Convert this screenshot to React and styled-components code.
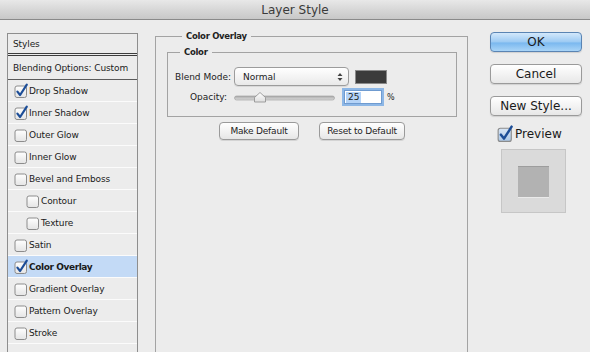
import React from 'react'
import styled, { createGlobalStyle } from 'styled-components'

const GlobalStyle = createGlobalStyle`
  html, body {
    margin: 0;
    padding: 0;
    background: #ececec;
  }
`

const Checkbox = ({ checked, tint, size = 14 }) => (
  <svg width={size} height={size} viewBox="0 0 14 14" style={{ flex: 'none', overflow: 'visible' }}>
    <defs>
      <linearGradient id={tint ? 'cbTint' : 'cbPlain'} x1="0" y1="0" x2="0" y2="1">
        <stop offset="0" stopColor={tint ? '#d8e6f5' : '#ffffff'} />
        <stop offset="1" stopColor={tint ? '#aac6e6' : '#e4e4e4'} />
      </linearGradient>
    </defs>
    <rect x="1" y="2" width="11.5" height="11.5" rx="2" fill={`url(#${tint ? 'cbTint' : 'cbPlain'})`} stroke="#8c8c8c" />
    {checked && (
      <path d="M3.4 7.6 L6.1 11 L12.8 0.6" fill="none" stroke="#1c4d97" strokeWidth="2.2" strokeLinecap="round" strokeLinejoin="round" />
    )}
  </svg>
)

const StyleItem = ({ label, checked, indent, selected }) => (
  <Item $selected={selected} $indent={indent}>
    {label && <Checkbox checked={checked} />}
    <ItemText $selected={selected}>{label}</ItemText>
  </Item>
)

const items = [
  { label: 'Drop Shadow', checked: true },
  { label: 'Inner Shadow', checked: true },
  { label: 'Outer Glow' },
  { label: 'Inner Glow' },
  { label: 'Bevel and Emboss' },
  { label: 'Contour', indent: true },
  { label: 'Texture', indent: true },
  { label: 'Satin' },
  { label: 'Color Overlay', checked: true, selected: true },
  { label: 'Gradient Overlay' },
  { label: 'Pattern Overlay' },
  { label: 'Stroke' },
  { label: '' },
]

export default function App() {
  return (
    <Window>
      <GlobalStyle />
      <TitleBar>Layer Style</TitleBar>
      <Body>
        <StylesPanel>
          <PanelHeader>Styles</PanelHeader>
          <BlendingRow>Blending Options: Custom</BlendingRow>
          {items.map((it, i) => (
            <StyleItem key={i} {...it} />
          ))}
        </StylesPanel>

        <Middle>
          <OuterGroup>
            <OuterLegend>Color Overlay</OuterLegend>
            <InnerGroup>
              <InnerLegend>Color</InnerLegend>
              <FieldGrid>
                <FieldLabel>Blend Mode:</FieldLabel>
                <Controls>
                  <Select>
                    <span>Normal</span>
                    <svg width="6" height="10" viewBox="0 0 6 10">
                      <path d="M0.5 4 L3 1 L5.5 4 Z M0.5 6 L3 9 L5.5 6 Z" fill="#444" />
                    </svg>
                  </Select>
                  <Swatch />
                </Controls>
                <FieldLabel $pad>Opacity:</FieldLabel>
                <Controls>
                  <Slider>
                    <svg width="101" height="12" viewBox="0 0 101 12">
                      <defs>
                        <linearGradient id="track" x1="0" y1="0" x2="0" y2="1">
                          <stop offset="0" stopColor="#a9a9a9" />
                          <stop offset="1" stopColor="#dcdcdc" />
                        </linearGradient>
                        <linearGradient id="thumb" x1="0" y1="0" x2="0" y2="1">
                          <stop offset="0" stopColor="#ffffff" />
                          <stop offset="1" stopColor="#dedede" />
                        </linearGradient>
                      </defs>
                      <rect x="0.5" y="5" width="100" height="4" rx="2" fill="url(#track)" stroke="#9c9c9c" strokeWidth="0.6" />
                      <path d="M20.5 11 V6.5 L26 1.5 L31.5 6.5 V11 Z" fill="url(#thumb)" stroke="#8d8d8d" strokeWidth="0.8" strokeLinejoin="round" />
                    </svg>
                  </Slider>
                  <NumberField>
                    <Selected>25</Selected>
                  </NumberField>
                  <Percent>%</Percent>
                </Controls>
              </FieldGrid>
            </InnerGroup>
            <ButtonRow>
              <SmallButton $w={80}>Make Default</SmallButton>
              <SmallButton $w={86}>Reset to Default</SmallButton>
            </ButtonRow>
          </OuterGroup>
        </Middle>

        <Side>
          <DialogButton $primary>OK</DialogButton>
          <DialogButton>Cancel</DialogButton>
          <DialogButton>New Style...</DialogButton>
          <PreviewToggle>
            <Checkbox checked tint size={16} />
            <span>Preview</span>
          </PreviewToggle>
          <PreviewBox>
            <PreviewSquare />
          </PreviewBox>
        </Side>
      </Body>
    </Window>
  )
}

const Window = styled.div`
  width: 590px;
  height: 352px;
  overflow: hidden;
  display: flex;
  flex-direction: column;
  background: #ececec;
  font-family: "DejaVu Sans", "Liberation Sans", sans-serif;
  color: #1c1c1c;
`

const TitleBar = styled.div`
  flex: none;
  height: 19px;
  border-bottom: 1px solid #8a8a8a;
  background: linear-gradient(#e8e8e8, #d4d4d4 60%, #c8c8c8);
  display: flex;
  align-items: center;
  justify-content: center;
  font-size: 12px;
  color: #3a3a3a;
`

const Body = styled.div`
  flex: 1;
  display: flex;
  min-height: 0;
`

const StylesPanel = styled.div`
  margin: 13px 0 0 7px;
  width: 129px;
  border: 1px solid #8e8e8e;
  border-bottom: none;
  display: flex;
  flex-direction: column;
  overflow: hidden;
  font-size: 9px;
  letter-spacing: -0.1px;
`

const PanelHeader = styled.div`
  flex: none;
  height: 19px;
  display: flex;
  align-items: center;
  padding-left: 5px;
  border-bottom: 3px double #3c3c3c;
`

const BlendingRow = styled.div`
  flex: none;
  height: 23px;
  display: flex;
  align-items: center;
  padding-left: 5px;
  border-bottom: 1px solid #5a5a5a;
`

const Item = styled.div`
  flex: none;
  height: 21px;
  display: flex;
  align-items: center;
  padding-left: ${p => (p.$indent ? 18 : 6)}px;
  border-bottom: 1px solid #fbfbfb;
  background: ${p => (p.$selected ? '#c3daf6' : 'transparent')};
`

const ItemText = styled.span`
  margin-left: 1px;
  font-weight: ${p => (p.$selected ? 'bold' : 'normal')};
  letter-spacing: ${p => (p.$selected ? '-0.4px' : '-0.1px')};
  color: #1a1a1a;
`

const Middle = styled.div`
  margin-left: 17px;
  width: 313px;
  display: flex;
  flex-direction: column;
`

const OuterGroup = styled.fieldset`
  flex: 1;
  margin: 11px 0 0 0;
  padding: 5px 10px 0 11px;
  border: 1px solid #a3a3a3;
  border-bottom: none;
  min-width: 0;
`

const OuterLegend = styled.legend`
  margin-left: 15px;
  padding: 0 4px;
  font-size: 8.5px;
  font-weight: bold;
  letter-spacing: -0.3px;
  line-height: 11px;
  color: #222;
`

const InnerGroup = styled.fieldset`
  margin: 0;
  padding: 9px 0 12px 0;
  border: 1px solid #a3a3a3;
  min-width: 0;
`

const InnerLegend = styled.legend`
  margin-left: 12px;
  padding: 0 4px;
  font-size: 8.5px;
  font-weight: bold;
  letter-spacing: -0.3px;
  line-height: 11px;
  color: #222;
`

const FieldGrid = styled.div`
  display: grid;
  grid-template-columns: 63px 1fr;
  column-gap: 3px;
  row-gap: 4px;
  align-items: center;
  font-size: 9px;
`

const FieldLabel = styled.span`
  text-align: right;
  padding-right: ${p => (p.$pad ? 4 : 0)}px;
  color: #222;
`

const Controls = styled.div`
  display: flex;
  align-items: center;
`

const Select = styled.div`
  width: 100px;
  height: 17px;
  padding: 0 5px 0 8px;
  display: flex;
  align-items: center;
  justify-content: space-between;
  border: 1px solid #9c9c9c;
  border-radius: 4px;
  background: linear-gradient(#ffffff, #f4f4f4 50%, #e9e9e9);
  box-shadow: 0 1px 0 rgba(0, 0, 0, 0.08);
`

const Swatch = styled.div`
  margin-left: 6px;
  width: 30px;
  height: 12px;
  background: #3b3b3b;
  border: 1px solid #8a8a8a;
`

const Slider = styled.div`
  width: 101px;
  height: 12px;
  display: flex;
`

const NumberField = styled.div`
  margin-left: 9px;
  width: 34px;
  height: 12px;
  padding: 0 1px;
  display: flex;
  align-items: center;
  background: #fff;
  border: 1px solid #6f9bd0;
  box-shadow: 0 0 0 2px #8db7e6;
`

const Selected = styled.span`
  background: #b4d3f7;
  padding: 0 2px;
  line-height: 11px;
`

const Percent = styled.span`
  margin-left: 5px;
  font-size: 8px;
`

const ButtonRow = styled.div`
  margin-top: 5px;
  display: flex;
  justify-content: center;
  gap: 20px;
`

const SmallButton = styled.div`
  width: ${p => p.$w - 2}px;
  height: 16px;
  display: flex;
  align-items: center;
  justify-content: center;
  font-size: 9px;
  letter-spacing: -0.2px;
  color: #222;
  border: 1px solid #9a9a9a;
  border-radius: 4px;
  background: linear-gradient(#ffffff, #f3f3f3 50%, #e6e6e6);
  box-shadow: 0 1px 0 rgba(0, 0, 0, 0.1);
`

const Side = styled.div`
  margin-left: 22px;
  padding-top: 12px;
  width: 92px;
  display: flex;
  flex-direction: column;
  gap: 12px;
`

const DialogButton = styled.div`
  height: 18px;
  display: flex;
  align-items: center;
  justify-content: center;
  font-size: 12px;
  color: #1a1a1a;
  border: 1px solid ${p => (p.$primary ? '#5a84b3' : '#9a9a9a')};
  border-radius: 4px;
  background: ${p =>
    p.$primary
      ? 'linear-gradient(#d3e8fb, #9ccaf3 50%, #7ab8ef 55%, #a9d4f7)'
      : 'linear-gradient(#ffffff, #f3f3f3 50%, #e7e7e7)'};
  box-shadow: 0 1px 1px rgba(0, 0, 0, 0.12);
`

const PreviewToggle = styled.div`
  margin-top: -2px;
  padding-left: 7px;
  display: flex;
  align-items: center;
  gap: 2px;
  font-size: 12px;
  color: #1a1a1a;
`

const PreviewBox = styled.div`
  margin: -5px 0 0 11px;
  width: 63px;
  height: 62px;
  border: 1px solid #c6c6c6;
  background: #dadada;
  display: flex;
  align-items: center;
  justify-content: center;
`

const PreviewSquare = styled.div`
  width: 31px;
  height: 30px;
  background: #b2b2b2;
  border-top: 1px solid #9d9d9d;
  box-shadow: 0 1px 0 #eaeaea;
`
